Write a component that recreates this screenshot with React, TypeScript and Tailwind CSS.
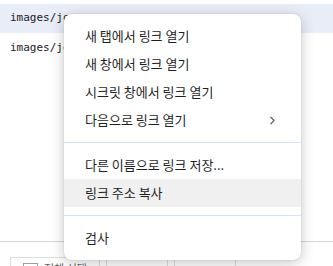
import { ChevronRight } from 'lucide-react';

/**
 * Browser context menu over a file list
 */

type MenuItem = { label: string; sub?: boolean; active?: boolean } | 'sep';

const items: MenuItem[] = [
  { label: '새 탭에서 링크 열기' },
  { label: '새 창에서 링크 열기' },
  { label: '시크릿 창에서 링크 열기' },
  { label: '다음으로 링크 열기', sub: true },
  'sep',
  { label: '다른 이름으로 링크 저장...' },
  { label: '링크 주소 복사', active: true },
  'sep',
  { label: '검사' },
];

export default function App() {
  return (
    <div className="relative w-[333px] h-[266px] overflow-hidden bg-white">
      {/* File list behind the menu */}
      <div className="pt-1 font-['DejaVu_Sans_Mono',monospace] text-[11px] text-[#202124]">
        <div className="h-[29px] bg-[#e9edf8] flex items-center pl-[10px]">images/jo</div>
        <div className="h-[30px] flex items-center pl-[10px]">images/jo</div>
      </div>

      {/* Bottom toolbar */}
      <div className="absolute left-0 right-0 top-[241px] border-t border-[#d6d6d6] bg-white h-[25px]">
        <div className="flex h-full pt-[15px] pl-[10px]">
          <div className="w-[90px] border border-[#dcdcdc] border-b-0 flex items-start pl-[12px] pt-[5px] gap-[6px]">
            <div className="w-[15px] h-[12px] border border-[#9aa0a6] border-b-0" />
            <span className="text-[11px] leading-none text-[#5f6368] font-['Noto_Sans_CJK_KR',sans-serif]">전체 선택</span>
          </div>
          <div className="w-[6px]" />
          <div className="w-[62px] border-l border-r border-[#dcdcdc]" />
          <div className="w-[6px]" />
          <div className="w-[62px] border-l border-r border-[#dcdcdc]" />
        </div>
      </div>

      {/* Context menu */}
      <div className="absolute left-[64px] top-[14px] w-[237px] rounded-[8px] bg-white py-[8px] shadow-[0_3px_14px_rgba(0,0,0,0.22),0_0_2px_rgba(0,0,0,0.12)] font-['Noto_Sans_CJK_KR','Noto_Sans',sans-serif] text-[13px] text-[#1f1f1f]">
        {items.map((item, i) =>
          item === 'sep' ? (
            <div key={i} className="pt-[8px] pb-[8px]">
              <div className="h-px bg-[#d3e3fd]" />
            </div>
          ) : (
            <div
              key={i}
              className={`h-[28px] flex items-center pl-[21px] pr-[22px] ${item.active ? 'bg-[#f0f0f0]' : ''}`}
            >
              <span className="flex-1">{item.label}</span>
              {item.sub && <ChevronRight size={13} strokeWidth={2.2} className="text-[#5f6368]" />}
            </div>
          )
        )}
      </div>
    </div>
  );
}
